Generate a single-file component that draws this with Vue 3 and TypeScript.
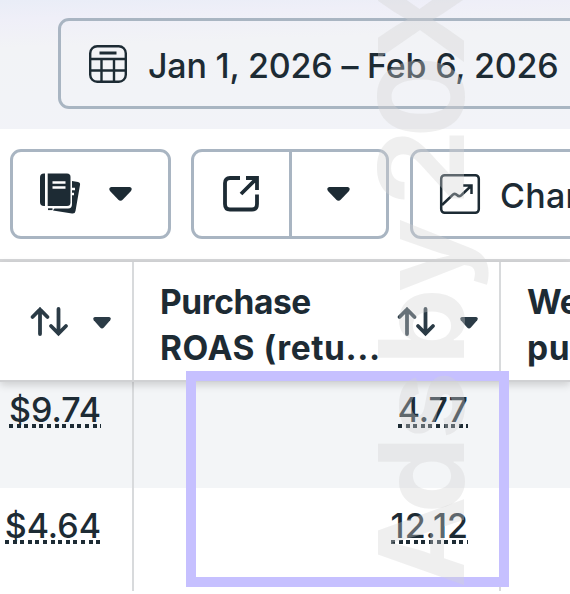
<template>
  <div class="screen">
    <header class="date-bar">
      <div class="date-picker">
        <svg class="calendar" viewBox="0 0 38 38" width="38" height="38">
          <rect x="1.2" y="1.2" width="35.6" height="35.6" rx="7" />
          <path d="M1 14H37M1 25.5H37M12.5 14V37M25 14V37" />
          <path class="thick" d="M10.5 8H27.5" />
        </svg>
        <span class="date-text">Jan 1, 2026 – Feb 6, 2026</span>
      </div>
    </header>

    <div class="toolbar">
      <button class="btn reports">
        <svg viewBox="0 0 42 42" width="42" height="42">
          <path class="solid" d="M32 8L38 9Q40.500 9.500 40 12L35.500 38Q35 41 32 40.500L13 37.500Z" />
          <path class="gap" d="M29 16H35M29 21H34" />
          <path class="cutout" d="M8 0H28Q32 0 32 4V31Q32 35.500 28 35.500H8Z" />
          <path class="solid" d="M4 .5H5V33H4Q0 33 0 29V4.500Q0 .5 4 .5Z" />
          <path class="solid" d="M7.700 .5H27Q30.500 .5 30.500 4V29.500Q30.500 33 27 33H7.700Z" />
          <path class="gap" d="M12.500 9.500H25.500M12.500 14.500H25.500" />
          <path class="foot" d="M8 36.200H12.500" />
        </svg>
        <svg class="caret" viewBox="0 0 24 15" width="23" height="14.5">
          <path d="M2.500 0H21.500Q25 1 23 4L14.500 13Q12 15.500 9.500 13L1 4Q-1 1 2.500 0Z" />
        </svg>
      </button>

      <div class="btn split">
        <button class="part export">
          <svg viewBox="0 0 36 36" width="36" height="36">
            <path d="M17 2H7Q2 2 2 7V28Q2 33.500 7 33.500H29Q34 33.500 34 28V18.500M23 2H34V14M33.500 2.500L18 18" />
          </svg>
        </button>
        <button class="part">
          <svg class="caret" viewBox="0 0 24 15" width="23" height="14.5">
            <path d="M2.500 0H21.500Q25 1 23 4L14.500 13Q12 15.500 9.500 13L1 4Q-1 1 2.500 0Z" />
          </svg>
        </button>
      </div>

      <button class="btn charts">
        <svg viewBox="0 0 40 40" width="40" height="40">
          <rect x="1.200" y="1.200" width="37.600" height="37.600" rx="3.500" />
          <path d="M2 31L13 20.500Q15 19 17 21T21 21.500L31 12M23 11.500H31.500V20" />
        </svg>
        <span>Charts</span>
      </button>
    </div>

    <section class="table">
      <div class="row head">
        <div v-for="(col, i) in columns" :key="i" class="cell">
          <div v-if="col.lines.length" class="title">
            <span v-for="line in col.lines" :key="line">{{ line }}</span>
          </div>
          <div v-if="col.sortable" class="sort">
            <svg class="arrows" viewBox="0 0 38 29" width="38" height="29">
              <path d="M10 27V2.500M2.500 10L10 2.500L17.500 10M28.500 2V26.500M21 19L28.500 26.500L36 19" />
            </svg>
            <svg class="caret" viewBox="0 0 24 15" width="18" height="12" preserveAspectRatio="none">
              <path d="M2.500 0H21.500Q25 1 23 4L14.500 13Q12 15.500 9.500 13L1 4Q-1 1 2.500 0Z" />
            </svg>
          </div>
        </div>
      </div>
      <div v-for="(row, r) in rows" :key="r" class="row body" :class="{ shaded: r === 0 }">
        <div v-for="(value, c) in row" :key="c" class="cell">
          <span v-if="value" class="value">{{ value }}</span>
        </div>
      </div>
    </section>

    <div class="highlight"></div>
    <svg class="watermark" viewBox="0 0 570 591" width="570" height="591" aria-hidden="true">
      <text
        transform="translate(463.700 588) rotate(-90) scale(1.04 1)"
        x="0 71.6 142.3 190 213.9 284.6 340 367.3 432.7 502.9"
      >Ads by 20X</text>
    </svg>
  </div>
</template>

<script setup lang="ts">
interface Column {
  lines: string[]
  sortable: boolean
}

const columns: Column[] = [
  { lines: [], sortable: true },
  { lines: ['Purchase', 'ROAS (retu...'], sortable: true },
  { lines: ['Website', 'purchases'], sortable: false },
]

const rows: string[][] = [
  ['$9.74', '4.77', ''],
  ['$4.64', '12.12', ''],
]
</script>

<style>
body {
  margin: 0;
  background: #fff;
}
</style>

<style scoped>
.screen {
  position: relative;
  width: 570px;
  height: 591px;
  overflow: hidden;
  background: #fff;
  color: #1d2b34;
  font-family: Inter, 'Noto Sans', sans-serif;
  font-size: 34px;
  font-weight: 500;
}

svg {
  display: block;
  flex: none;
  fill: none;
  stroke: #1d2b34;
  overflow: visible;
}

.date-bar {
  box-sizing: border-box;
  height: 129px;
  padding: 18px 0 0 58px;
  background: linear-gradient(178deg, #e9edf7 0, #efeff8 20px, #f2f3f6 48px, #f2f3f8 100%);
}

.date-picker {
  box-sizing: border-box;
  display: flex;
  align-items: center;
  gap: 21px;
  width: 560px;
  height: 91px;
  padding-left: 28px;
  border: 3px solid #a9b5c2;
  border-radius: 11px;
  white-space: nowrap;
}

.calendar {
  stroke-width: 2.4;
}

.calendar .thick {
  stroke-width: 3;
}

.date-text {
  padding-top: 3px;
  letter-spacing: -0.2px;
}

.toolbar {
  display: flex;
  gap: 20px;
  height: 110px;
  padding: 20px 0 0 10px;
}

button {
  padding: 0;
  border: 0;
  background: none;
  color: inherit;
  font: inherit;
}

.btn {
  box-sizing: border-box;
  display: flex;
  flex: none;
  align-items: center;
  height: 90px;
  border: 3px solid #a9b5c2;
  border-radius: 11px;
}

.reports {
  width: 161px;
  padding-left: 27px;
  gap: 27px;
}

.solid,
.caret {
  fill: #1d2b34;
  stroke: none;
}

.cutout {
  fill: #fff;
  stroke: none;
}

.gap {
  stroke: #fff;
  stroke-width: 2.6;
}

.foot {
  stroke-width: 1.8;
}

.split {
  width: 198px;
}

.part {
  display: flex;
  flex: 1;
  align-items: center;
  justify-content: center;
  align-self: stretch;
}

.export {
  border-right: 3px solid #a9b5c2;
}

.export svg {
  stroke-width: 3.8;
}

.charts {
  width: 240px;
  margin-left: 1px;
  padding-left: 27px;
  gap: 20px;
}

.charts svg {
  stroke-width: 2.5;
}

.charts span {
  padding-top: 3px;
  letter-spacing: 0.3px;
}

.table {
  border-top: 3px solid #d5d6d8;
}

.row {
  position: relative;
  display: grid;
  grid-template-columns: 134px 367px 200px;
}

.cell {
  box-sizing: border-box;
  display: flex;
  border-right: 2px solid #d8dadc;
}

.head {
  z-index: 1;
  height: 118px;
  border-bottom: 2px solid #d0d1d3;
  background: #fff;
  box-shadow: 0 3px 8px rgba(0, 0, 0, 0.16);
}

.head .cell {
  align-items: center;
  padding: 7px 21px 0 26px;
}

.title {
  display: flex;
  flex-direction: column;
  flex: none;
  width: 224px;
  font-size: 33.5px;
  font-weight: 700;
  line-height: 46px;
  letter-spacing: -0.4px;
  white-space: nowrap;
}

.title span:nth-child(2) {
  letter-spacing: 0.55px;
}

.sort {
  display: flex;
  align-items: center;
  gap: 25px;
  margin: -7px 0 0 auto;
}

.arrows {
  stroke: #2b3b46;
  stroke-width: 3.8;
  stroke-linecap: round;
}

.sort .caret {
  fill: #2b3b46;
  margin-top: 4px;
}

.body {
  height: 106px;
}

.body + .body {
  height: 110px;
}

.shaded {
  background: #f3f5f7;
}

.body .cell {
  justify-content: flex-end;
  align-items: flex-start;
  padding: 8px 31px 0 0;
}

.body + .body .cell {
  padding-top: 18px;
}

.value {
  height: 38px;
  line-height: 39px;
  background: repeating-linear-gradient(90deg, #1d2b34 0 4px, transparent 4px 7.6px) left bottom / 100% 4px no-repeat;
}

.highlight {
  position: absolute;
  z-index: 2;
  left: 186px;
  top: 371px;
  box-sizing: border-box;
  width: 323px;
  height: 216px;
  border: 10px solid #c6c0ff;
}

.watermark {
  position: absolute;
  z-index: 3;
  inset: 0;
  fill: rgba(211, 211, 211, 0.36);
  stroke: none;
  font-size: 118px;
  font-weight: 700;
  pointer-events: none;
}
</style>
